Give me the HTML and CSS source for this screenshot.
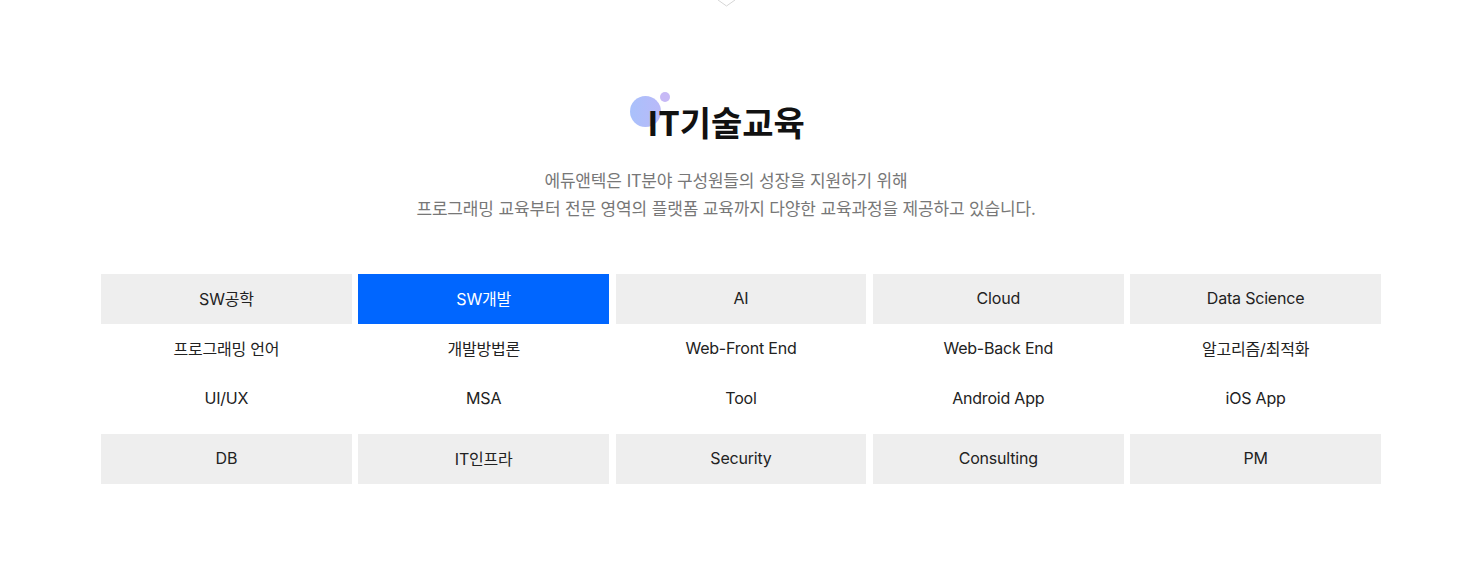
FILE: index.html
```html
<!DOCTYPE html>
<html lang="ko">
<head>
<meta charset="utf-8">
<title>IT기술교육</title>
<link rel="stylesheet" href="styles.css">
</head>
<body>
<div class="top-deco">
  <svg width="20" height="7" viewBox="0 0 20 7"><polyline points="1,0 9.5,6 18,0" fill="none" stroke="#d6d6d6" stroke-width="1"/></svg>
</div>
<section class="edu">
  <div class="edu-head">
    <h2 class="edu-title"><span class="title-text"><i class="dot dot-big"></i><i class="dot dot-small"></i><span class="title-label">IT기술교육</span></span></h2>
    <p class="edu-desc">에듀앤텍은 IT분야 구성원들의 성장을 지원하기 위해<br>프로그래밍 교육부터 전문 영역의 플랫폼 교육까지 다양한 교육과정을 제공하고 있습니다.</p>
  </div>
  <ul class="cat-grid">
    <li class="cat gray">SW공학</li>
    <li class="cat active">SW개발</li>
    <li class="cat gray">AI</li>
    <li class="cat gray">Cloud</li>
    <li class="cat gray">Data Science</li>
    <li class="cat">프로그래밍 언어</li>
    <li class="cat">개발방법론</li>
    <li class="cat">Web-Front End</li>
    <li class="cat">Web-Back End</li>
    <li class="cat">알고리즘/최적화</li>
    <li class="cat">UI/UX</li>
    <li class="cat">MSA</li>
    <li class="cat">Tool</li>
    <li class="cat">Android App</li>
    <li class="cat">iOS App</li>
    <li class="cat gray last">DB</li>
    <li class="cat gray last">IT인프라</li>
    <li class="cat gray last">Security</li>
    <li class="cat gray last">Consulting</li>
    <li class="cat gray last">PM</li>
  </ul>
</section>
</body>
</html>
```
FILE: styles.css
```css
* { box-sizing: border-box; }
html, body { margin: 0; padding: 0; background: #fff; }
body {
  font-family: Inter, "Noto Sans CJK KR", "Noto Sans", sans-serif;
  color: #222;
  width: 1483px;
  height: 580px;
  overflow: hidden;
}
.top-deco {
  width: 1452px;
  height: 7px;
  display: flex;
  justify-content: center;
  padding-left: 1px;
}
.top-deco svg { display: block; }
.edu {
  padding-top: 93px;
  display: flex;
  flex-direction: column;
}
.edu-head {
  width: 1452px;
  display: flex;
  flex-direction: column;
  align-items: center;
}
.edu-title {
  margin: 0;
  font-size: 34px;
  line-height: 44px;
  font-weight: 700;
  color: #111;
  letter-spacing: 0;
  font-family: "Noto Sans CJK KR", sans-serif;
}
.title-text {
  position: relative;
  display: inline-block;
}
.title-label { position: relative; }
.dot {
  position: absolute;
  border-radius: 50%;
  display: block;
}
.dot-big {
  width: 31px;
  height: 31px;
  left: -17px;
  top: -4px;
  background: linear-gradient(90deg, #a9c1fb 0%, #b9b9f9 100%);
}
.dot-small {
  width: 10px;
  height: 10px;
  left: 13px;
  top: -8px;
  background: #c7b9f6;
}
.edu-desc {
  margin: 22px 0 0;
  text-align: center;
  font-size: 17px;
  line-height: 28px;
  color: #777;
  font-family: "Noto Sans CJK KR", sans-serif;
  letter-spacing: -0.15px;
}
.cat-grid {
  list-style: none;
  margin: 52px 0 0 101px;
  padding: 0;
  width: 1280px;
  display: grid;
  grid-template-columns: repeat(5, 1fr);
  column-gap: 6.5px;
  row-gap: 0;
}
.cat {
  height: 50px;
  padding-bottom: 2px;
  display: flex;
  align-items: center;
  justify-content: center;
  font-size: 16px;
  color: #222;
  letter-spacing: -0.2px;
}
.cat.gray { background: #eeeeee; }
.cat.active { background: #0066ff; color: #fff; }
.cat.last { margin-top: 10px; }
```
